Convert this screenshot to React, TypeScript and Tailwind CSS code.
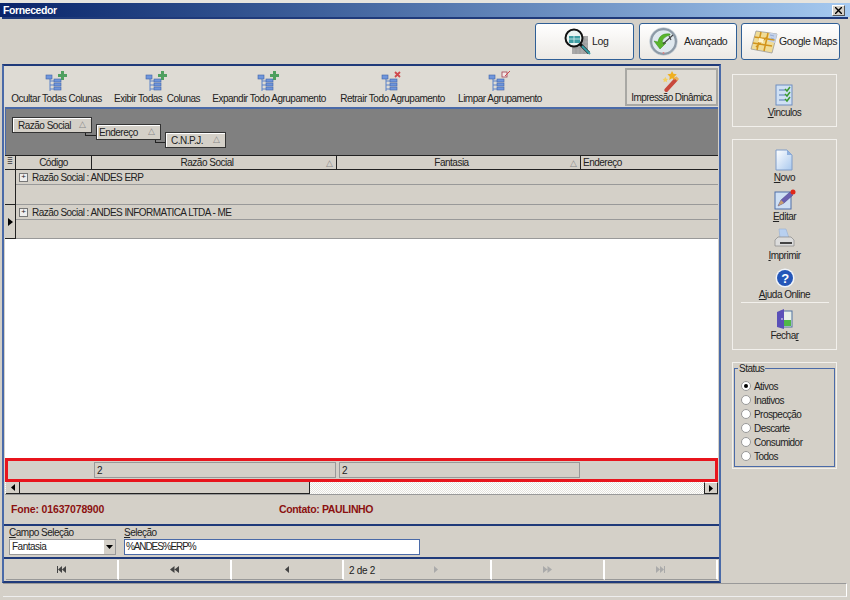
import React from 'react';

// small tree glyph used on the grouping toolbar
const TreeIcon = ({ badge }: { badge: 'plus' | 'x' | 'clear' }) => (
  <svg width="24" height="22" viewBox="0 0 24 22">
    <path d="M5 7v13M5 10h5M5 14h5M5 18h5" stroke="#5b82c8" strokeWidth="1" fill="none" />
    <rect x="1" y="4" width="6" height="4" fill="#6f96dc" stroke="#3f63a8" strokeWidth="0.6" />
    <rect x="9" y="8" width="7" height="3" fill="#6f96dc" stroke="#3f63a8" strokeWidth="0.6" />
    <rect x="9" y="12" width="7" height="3" fill="#6f96dc" stroke="#3f63a8" strokeWidth="0.6" />
    <rect x="9" y="16" width="7" height="3" fill="#6f96dc" stroke="#3f63a8" strokeWidth="0.6" />
    {badge === 'plus' && <path d="M16 0h3v3h3v3h-3v3h-3V6h-3V3h3z" fill="#4f9f5f" />}
    {badge === 'x' && <path d="M14 1l5 5M19 1l-5 5" stroke="#d0484c" strokeWidth="1.8" />}
    {badge === 'clear' && (
      <g>
        <rect x="14" y="1" width="5" height="5" fill="#f4e8e8" stroke="#a04050" strokeWidth="0.8" />
        <path d="M17 5l5-5" stroke="#d0484c" strokeWidth="1" />
      </g>
    )}
  </svg>
);

const ToolItem = ({ label, badge, className }: { label: string; badge: 'plus' | 'x' | 'clear'; className: string }) => (
  <div className={`flex shrink-0 flex-col items-center ${className}`}>
    <TreeIcon badge={badge} />
    <span className="whitespace-pre text-[10px] leading-[12px] tracking-[-0.5px] text-[#222]">{label}</span>
  </div>
);

const TopButton = ({ label, icon, className }: { label: string; icon: React.ReactNode; className: string }) => (
  <div className={`flex h-[37px] items-center rounded-[3px] border border-[#2f5f96] bg-gradient-to-b from-white to-[#ece9e4] text-[10.5px] tracking-[-0.4px] text-[#222] ${className}`}>
    {icon}
    <span className="whitespace-pre">{label}</span>
  </div>
);

const SideItem = ({ icon, children, className = '' }: { icon: React.ReactNode; children: React.ReactNode; className?: string }) => (
  <div className={`flex flex-col items-center text-[10px] leading-[12px] tracking-[-0.5px] text-[#222] ${className}`}>
    {icon}
    <span className="mt-[1px] whitespace-pre">{children}</span>
  </div>
);

// link is the elbow line that ties a box to the next grouping level
const GroupBox = ({ label, className, link }: { label: string; className: string; link?: string }) => (
  <div className={`relative flex h-[16px] shrink-0 items-center justify-between border border-[#333] bg-[#d4d0c8] pr-[6px] text-[10px] tracking-[-0.5px] text-[#222] shadow-[inset_1px_1px_0_#fff] ${className}`}>
    <span>{label}</span>
    <span className="text-[9px] text-[#888]">△</span>
    {link && <span className={`absolute top-[15px] h-[3px] border-b border-l border-[#222] ${link}`} />}
  </div>
);

const HeaderCell = ({ label, className, sort }: { label: string; className: string; sort?: boolean }) => (
  <div className={`relative flex h-full shrink-0 items-center justify-center border-r border-[#222] text-[10px] tracking-[-0.5px] text-[#222] ${sort ? 'pr-[14px]' : ''} ${className}`}>
    {label}
    {sort && <span className="absolute right-[4px] top-[1px] text-[9px] text-[#888]">△</span>}
  </div>
);

const GroupRow = ({ text, rowH, selected }: { text: string; rowH: string; selected?: boolean }) => (
  <div className="flex shrink-0 flex-col">
    <div className="flex">
      <div className="w-[11px] shrink-0 border-r border-[#222]" />
      <div className="flex h-[15px] flex-1 items-center gap-[4px] border-b border-[#999] pl-[3px] text-[10px] tracking-[-0.55px] text-[#222]">
        <span className="flex h-[9px] w-[9px] items-center justify-center border border-[#777] bg-[#eee] text-[8px] leading-none tracking-normal">+</span>
        <span>{text}</span>
      </div>
    </div>
    <div className="flex">
      <div className={`flex w-[11px] shrink-0 items-start border-r border-b border-[#222] ${rowH}`}>
        {selected && <svg width="6" height="8" viewBox="0 0 6 8" className="mt-[-2px] ml-[3px]"><path d="M0 0l5 4-5 4z" fill="#000" /></svg>}
      </div>
      <div className={`flex-1 border-b border-[#999] ${rowH}`} />
    </div>
  </div>
);

const Radio = ({ label, checked }: { label: string; checked?: boolean }) => (
  <div className="flex h-[14px] items-center gap-[3px] text-[10px] tracking-[-0.55px] text-[#222]">
    <span className="flex h-[10px] w-[10px] items-center justify-center rounded-full border border-[#999] bg-white">
      {checked && <span className="h-[4px] w-[4px] rounded-full bg-black" />}
    </span>
    {label}
  </div>
);

const NavCell = ({ d, faded, className }: { d: string; faded?: boolean; className: string }) => (
  <div className={`flex h-[20px] items-center justify-center border-r-2 border-b border-r-white border-b-[#999] ${className}`}>
    <svg width="9" height="7" viewBox="0 0 9 7"><path d={d} fill={faded ? '#aaa' : '#444'} /></svg>
  </div>
);

export default function App() {
  return (
    <div className="flex h-[600px] w-[850px] flex-col overflow-hidden bg-[#d4d0c8] font-['Liberation_Sans',sans-serif]">
      {/* title bar */}
      <div className="flex h-[17px] shrink-0 items-center justify-between border-t-[3px] border-t-[#e6e4de] bg-gradient-to-r from-[#0a246a] to-[#a6caf0] pl-[3px] pr-[5px] text-[10.5px] font-bold tracking-[-0.4px] text-white">
        <span className="pt-[1px]">Fornecedor</span>
        <span className="flex h-[11px] w-[13px] items-center justify-center border border-[#555] border-t-white border-l-white bg-[#d4d0c8]">
          <svg width="7" height="7" viewBox="0 0 7 7"><path d="M0 0l7 7M7 0L0 7" stroke="#000" strokeWidth="1.4" /></svg>
        </span>
      </div>

      {/* top buttons */}
      <div className="mx-[2px] flex h-[47px] shrink-0 items-center justify-end border-t-2 border-t-[#1f3a7a] pr-[8px]">
        <TopButton label="Log" className="mr-[5px] w-[99px] pl-[27px]" icon={
          <svg width="29" height="29" viewBox="0 0 29 29">
            <rect x="9" y="9" width="16" height="18" fill="#a9a9a9" />
            <path d="M9 13h16M9 17h16M9 21h16M13 9v18M17 9v18M21 9v18" stroke="#8f8f8f" strokeWidth="0.5" />
            <path d="M17 17l9 9" stroke="#111" strokeWidth="3" />
            <path d="M19 19l8 8" stroke="#38a0a8" strokeWidth="2" />
            <circle cx="11" cy="11" r="8.500" fill="#eaf4f2" stroke="#111" strokeWidth="2" />
            <rect x="6" y="9" width="11" height="7" fill="#3f9ea4" />
            <path d="M6 12h11M11 9v7" stroke="#d8f0ee" strokeWidth="0.8" />
          </svg>
        } />
        <TopButton label="Avançado" className="mr-[4px] w-[98px] pl-[9px]" icon={
          <svg width="29" height="29" viewBox="0 0 29 29" className="mr-[6px]">
            <circle cx="14.500" cy="14.500" r="12.500" fill="#dfe8ee" stroke="#8d9aa6" strokeWidth="2.500" />
            <circle cx="14.500" cy="14.500" r="14" fill="none" stroke="#c8d2da" strokeWidth="0.6" />
            <path d="M21 7c-7-1-11 2-12 8l-4-1 6 8 6-6-4-1c1-4 4-6 8-7z" fill="#5ab52c" stroke="#2f8a18" strokeWidth="0.5" />
            <path d="M14 17l10-9M20 9l2 4" stroke="#444" strokeWidth="1.100" fill="none" />
            <circle cx="14.500" cy="26" r="1" fill="#d88080" />
          </svg>
        } />
        <TopButton label="Google Maps" className="w-[99px] pl-[8px]" icon={
          <svg width="28" height="25" viewBox="0 0 28 25" className="mr-[1px]">
            <path d="M6 2l21 3-5 19L1 20z" fill="#f0dc96" stroke="#9a9a9a" strokeWidth="0.8" />
            <path d="M20 3.800l7 1.200-2 9-7-2z" fill="#c4d2ea" />
            <path d="M4.500 8l20 3M3 14l19 3M11 3L7 21M18 4l-4 18M6 18L17 8" stroke="#d2941c" strokeWidth="1.500" fill="none" />
            <path d="M9 9l5 1-1 4-5-1z" fill="#fff6d0" />
            <path d="M20 6l4 1M21 9l3 1" stroke="#8ea4cc" strokeWidth="0.8" />
          </svg>
        } />
      </div>

      {/* body */}
      <div className="flex min-h-0 flex-1">
        <div className="ml-[2px] flex w-[719px] shrink-0 flex-col border-x-2 border-t-2 border-b-2 border-x-[#4a6aa8] border-t-[#1f3a7a] border-b-[#1f3a7a]">
          {/* toolbar */}
          <div className="flex h-[41px] shrink-0 items-start bg-[#dedbd4] pt-[5px]">
            <ToolItem label="Ocultar Todas Colunas" badge="plus" className="ml-[8px] w-[89px]" />
            <ToolItem label="Exibir Todas  Colunas" badge="plus" className="ml-[14px] w-[84px]" />
            <ToolItem label="Expandir Todo Agrupamento" badge="plus" className="ml-[13px] w-[114px]" />
            <ToolItem label="Retrair Todo Agrupamento" badge="x" className="ml-[13px] w-[107px]" />
            <ToolItem label="Limpar Agrupamento" badge="clear" className="ml-[13px] w-[82px]" />
            <div className="mt-[-3px] ml-[84px] flex h-[38px] w-[93px] shrink-0 flex-col items-center border-2 border-[#a8a8a4] pt-[1px]">
              <svg width="22" height="22" viewBox="0 0 22 22">
                <path d="M5 20L15 9" stroke="#c8483c" strokeWidth="4" strokeLinecap="round" />
                <path d="M15 9l2-2" stroke="#e8b060" strokeWidth="4" />
                <path d="M11 0l1.500 3 3.500.5-2.500 2.400.6 3.400-3-1.600-3 1.600.6-3.400L6.200 3.500 9.700 3z" fill="#f0b020" />
                <path d="M4 6l1 2 2 .3-1.500 1.400.4 2-1.900-1-1.900 1 .4-2L1 8.300 3 8z" fill="#f4d060" />
              </svg>
              <span className="whitespace-pre text-[10px] leading-[12px] tracking-[-0.6px] text-[#222]">Impressão Dinâmica</span>
            </div>
          </div>

          {/* grid */}
          <div className="mx-[1px] flex min-h-0 flex-1 flex-col">
            <div className="flex h-[48px] shrink-0 items-start border-t-2 border-l border-t-[#4a6aa8] border-l-[#4a6aa8] bg-[#808080] pl-[6px] pt-[8px]">
              <GroupBox label="Razão Social" className="w-[80px] pl-[5px]" link="left-[72px] w-[11px]" />
              <GroupBox label="Endereço" className="mt-[7px] ml-[4px] w-[65px] pl-[2px]" link="left-[58px] w-[10px]" />
              <GroupBox label="C.N.P.J." className="mt-[15px] ml-[4px] w-[61px] pl-[5px]" />
            </div>
            <div className="flex h-[15px] shrink-0 border-y border-[#222]">
              <div className="flex h-full w-[11px] shrink-0 items-center justify-center border-r border-[#222] text-[7px] text-[#555]">≣</div>
              <HeaderCell label="Código" className="w-[76px]" />
              <HeaderCell label="Razão Social" className="w-[245px]" sort />
              <HeaderCell label="Fantasia" className="w-[244px]" sort />
              <div className="flex h-full flex-1 items-center pl-[2px] text-[10px] tracking-[-0.5px] text-[#222]">Endereço</div>
            </div>
            <GroupRow text="Razão Social : ANDES ERP" rowH="h-[20px]" />
            <GroupRow text="Razão Social : ANDES INFORMATICA LTDA - ME" rowH="h-[19px]" selected />
            <div className="min-h-0 flex-1 bg-white" />

            {/* summary footer */}
            <div className="flex h-[24px] shrink-0 items-center border-[3px] border-[#e8141c] pl-[86px] text-[10px] text-[#222]">
              <div className="flex h-[16px] w-[242px] items-center border border-[#999] pl-[2px]">2</div>
              <div className="ml-[3px] flex h-[16px] w-[241px] items-center border border-[#999] pl-[2px]">2</div>
            </div>

            {/* horizontal scroll */}
            <div className="flex h-[13px] shrink-0 border-b border-[#999] bg-[repeating-conic-gradient(#e4e2dc_0%_25%,#fff_0%_50%)] bg-[length:2px_2px] pl-[1px]">
              <div className="flex w-[14px] items-center justify-center border-r border-b border-[#222] bg-[#d4d0c8]">
                <svg width="4" height="7" viewBox="0 0 4 7"><path d="M4 0L0 3.500 4 7z" fill="#000" /></svg>
              </div>
              <div className="w-[290px] border-r border-b border-[#222] bg-[#d4d0c8]" />
              <div className="flex-1" />
              <div className="flex w-[14px] items-center justify-center border border-[#222] border-t-white bg-[#d4d0c8]">
                <svg width="4" height="7" viewBox="0 0 4 7"><path d="M0 0l4 3.500L0 7z" fill="#000" /></svg>
              </div>
            </div>
          </div>

          {/* contact info */}
          <div className="flex h-[31px] shrink-0 items-center border-b-2 border-b-[#1f3a7a] pl-[7px] text-[10.5px] font-bold tracking-[-0.15px] text-[#8b1010]">
            <span className="w-[268px]">Fone: 01637078900</span>
            <span className="tracking-[-0.35px]">Contato: PAULINHO</span>
          </div>

          {/* filter */}
          <div className="flex h-[33px] shrink-0 items-end gap-[8px] border-b-2 border-b-[#1f3a7a] pb-[2px] pl-[5px] text-[10px] leading-[12px] tracking-[-0.5px] text-[#222]">
            <div className="flex w-[107px] flex-col">
              <span><u>C</u>ampo Seleção</span>
              <div className="flex h-[16px] items-center justify-between border border-[#999] bg-white pl-[2px]">
                Fantasia
                <span className="flex h-full w-[11px] items-center justify-center bg-[#d4d0c8]">
                  <svg width="7" height="4" viewBox="0 0 7 4"><path d="M0 0h7L3.500 4z" fill="#000" /></svg>
                </span>
              </div>
            </div>
            <div className="flex w-[296px] flex-col">
              <span><u>S</u>eleção</span>
              <div className="flex h-[16px] items-center border border-[#4a6aa8] bg-white pl-[1px] tracking-[-1.1px]">%ANDES%ERP%</div>
            </div>
          </div>

          {/* record navigator */}
          <div className="mt-[1px] mb-[1px] flex h-[20px] shrink-0 pl-[2px] pr-[1px] text-[10px] tracking-[-0.3px] text-[#222]">
            <NavCell className="w-[113px]" d="M0 0h1v7H0zM1 3.500L5 0v7zM5 3.500L9 0v7z" />
            <NavCell className="w-[113px]" d="M0 3.500L4.500 0v7zM4.500 3.500L9 0v7z" />
            <NavCell className="w-[112px]" d="M2 3.500L6 0v7z" />
            <div className="flex h-[20px] w-[36px] items-center justify-center bg-[#d8d5ce]">2 de 2</div>
            <NavCell className="w-[112px]" d="M3 0l4 3.500L3 7z" faded />
            <NavCell className="w-[113px]" d="M0 0l4.500 3.500L0 7zM4.500 0L9 3.500 4.500 7z" faded />
            <NavCell className="flex-1 border-r-[#999]" d="M0 0l4 3.500L0 7zM4 0l4 3.500L4 7zM8 0h1v7H8z" faded />
          </div>
        </div>

        {/* sidebar */}
        <div className="ml-[11px] flex w-[105px] shrink-0 flex-col pt-[10px]">
          <div className="flex h-[53px] flex-col items-center justify-center border border-[#f2f0ec] pt-[1px]">
            <SideItem icon={
              <svg width="18" height="22" viewBox="0 0 18 22">
                <rect x="1" y="1" width="16" height="20" fill="#cfe0f4" stroke="#6f8ec0" />
                <path d="M4 6h6M4 11h6M4 16h6" stroke="#7f9cc8" strokeWidth="1.500" />
                <path d="M10 5l2 2 3-4M10 10l2 2 3-4M10 15l2 2 3-4" stroke="#3a9a30" strokeWidth="1.500" fill="none" />
              </svg>
            }><u>V</u>inculos</SideItem>
          </div>

          <div className="mt-[12px] flex h-[211px] flex-col items-center border border-[#f2f0ec] pt-[9px]">
            <SideItem icon={
              <svg width="18" height="22" viewBox="0 0 18 22">
                <defs><linearGradient id="novoPage" x1="0" y1="0" x2="1" y2="1"><stop offset="0" stopColor="#fff" /><stop offset="1" stopColor="#a8c8ee" /></linearGradient></defs>
                <path d="M1 1h11l5 5v15H1z" fill="url(#novoPage)" stroke="#7f9cc8" />
                <path d="M12 1v5h5z" fill="#8fb0de" />
              </svg>
            }><u>N</u>ovo</SideItem>
            <SideItem className="mt-[5px]" icon={
              <svg width="22" height="21" viewBox="0 0 22 21">
                <rect x="1" y="3" width="16" height="17" fill="#cfe0f4" stroke="#4f6fa8" />
                <path d="M4 17l3-6 9-8 3 3-9 8z" fill="#6a60b0" stroke="#443c80" strokeWidth="0.5" />
                <path d="M4 17l3-6 3 3z" fill="#c8a070" />
                <circle cx="19" cy="3" r="2.500" fill="#e02818" />
              </svg>
            }><u>E</u>ditar</SideItem>
            <SideItem className="mt-[5px]" icon={
              <svg width="21" height="21" viewBox="0 0 21 21">
                <path d="M5 1h7l3 9H6z" fill="#b8d0f0" stroke="#8fa8d0" strokeWidth="0.5" />
                <path d="M1 12l3-3h13l3 3v6H1z" fill="#dcdcdc" stroke="#888" strokeWidth="0.7" />
                <rect x="6" y="14" width="12" height="2" fill="#444" />
              </svg>
            }><u>I</u>mprimir</SideItem>
            <div className="mt-[6px] w-[88px] border-b border-b-[#f2f0ec] pb-[1px]">
              <SideItem icon={
                <svg width="20" height="20" viewBox="0 0 20 20">
                  <circle cx="10" cy="10" r="9.500" fill="#f0f4fa" />
                  <circle cx="10" cy="10" r="8" fill="#2456b8" />
                  <text x="10" y="14.500" textAnchor="middle" fontSize="13" fontWeight="700" fill="#fff" fontFamily="Liberation Sans">?</text>
                </svg>
              }><u>A</u>juda Online</SideItem>
            </div>
            <SideItem className="mt-[6px]" icon={
              <svg width="17" height="20" viewBox="0 0 17 20">
                <rect x="5" y="2" width="11" height="16" fill="#e8f0e8" stroke="#5070a0" />
                <rect x="8" y="11" width="7" height="6" fill="#50b848" />
                <path d="M1 3l7-3v20l-7-2z" fill="#5a50b8" />
                <circle cx="6" cy="10" r="0.800" fill="#fff" />
              </svg>
            }>Fecha<u>r</u></SideItem>
          </div>

          <div className="mt-[12px] h-[107px] border border-[#f2f0ec] px-[1px] pt-[5px]">
            <div className="relative h-[99px] border border-[#4a6aa8] pl-[6px] pt-[10px]">
              <span className="absolute left-[3px] top-[-6px] bg-[#d4d0c8] px-[1px] text-[10px] leading-[12px] tracking-[-0.5px] text-[#222]">Status</span>
              <Radio label="Ativos" checked />
              <Radio label="Inativos" />
              <Radio label="Prospecção" />
              <Radio label="Descarte" />
              <Radio label="Consumidor" />
              <Radio label="Todos" />
            </div>
          </div>
        </div>
      </div>

      {/* status bar */}
      <div className="mx-[3px] mb-[3px] h-[14px] shrink-0 border-t border-r border-b border-t-[#999] border-r-white border-b-[#eee]" />
    </div>
  );
}
